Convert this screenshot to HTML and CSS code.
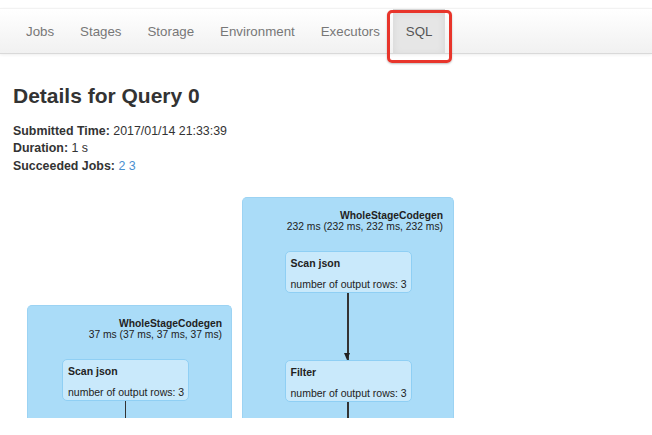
FILE: index.html
```html
<!DOCTYPE html>
<html>
<head>
<meta charset="utf-8">
<title>Details for Query 0</title>
<link rel="stylesheet" href="styles.css">
</head>
<body>
<nav class="navbar">
  <ul class="nav">
    <li class="nav-item"><a class="nav-link">Jobs</a></li>
    <li class="nav-item"><a class="nav-link">Stages</a></li>
    <li class="nav-item"><a class="nav-link">Storage</a></li>
    <li class="nav-item"><a class="nav-link">Environment</a></li>
    <li class="nav-item"><a class="nav-link">Executors</a></li>
    <li class="nav-item active"><a class="nav-link">SQL</a><span class="callout"></span></li>
  </ul>
</nav>
<main class="content">
  <h3 class="page-title">Details for Query 0</h3>
  <ul class="info">
    <li><strong>Submitted Time:</strong> 2017/01/14 21:33:39</li>
    <li><strong>Duration:</strong> 1 s</li>
    <li><strong>Succeeded Jobs:</strong> <a class="job-link">2</a> <a class="job-link">3</a></li>
  </ul>
  <div class="plan">
    <div class="cluster cluster-left">
      <div class="cluster-title">
        <div class="cluster-name">WholeStageCodegen</div>
        <div class="cluster-time">37 ms (37 ms, 37 ms, 37 ms)</div>
      </div>
      <div class="stack stack-left">
        <div class="node">
          <div class="node-name">Scan json</div>
          <div class="node-metric">number of output rows: 3</div>
        </div>
        <div class="edge stub"></div>
      </div>
    </div>
    <div class="cluster cluster-right">
      <div class="cluster-title">
        <div class="cluster-name">WholeStageCodegen</div>
        <div class="cluster-time">232 ms (232 ms, 232 ms, 232 ms)</div>
      </div>
      <div class="stack stack-center">
        <div class="node">
          <div class="node-name">Scan json</div>
          <div class="node-metric">number of output rows: 3</div>
        </div>
        <div class="edge arrow"></div>
        <div class="node">
          <div class="node-name">Filter</div>
          <div class="node-metric">number of output rows: 3</div>
        </div>
        <div class="edge stub"></div>
      </div>
    </div>
  </div>
</main>
</body>
</html>
```

FILE: styles.css
```css
html, body {
  margin: 0;
  padding: 0;
  background: #ffffff;
}

body {
  font-family: "Liberation Sans", Arial, Helvetica, sans-serif;
  color: #333333;
}

.navbar {
  margin-top: 8px;
  height: 46px;
  background: linear-gradient(#ffffff, #f1f1f1);
  border-top: 1px solid #f2f2f2;
  border-bottom: 1px solid #d9d9d9;
  box-shadow: 0 1px 3px rgba(0, 0, 0, 0.07);
  box-sizing: border-box;
}

.nav {
  list-style: none;
  margin: 0;
  padding: 0 0 0 13px;
  display: flex;
  height: 100%;
}

.nav-item {
  position: relative;
  display: flex;
  align-items: center;
  padding: 2px 13px 0;
}

.nav-link {
  font-size: 13.3px;
  color: #777777;
  line-height: 16px;
}

.nav-item.active {
  background: #e6e6e6;
  box-shadow: inset 0 3px 8px rgba(0, 0, 0, 0.08);
}

.nav-item.active .nav-link {
  color: #555555;
}

.callout {
  position: absolute;
  left: -6px;
  right: -7px;
  top: 1px;
  bottom: -10px;
  border: 3px solid #e8352b;
  border-radius: 5px;
  box-shadow: 0 1px 2px rgba(0, 0, 0, 0.25);
}

.content {
  padding: 0 13px;
}

.page-title {
  margin: 29px 0 14.5px;
  font-size: 21px;
  line-height: 25px;
  font-weight: bold;
  color: #333333;
}

.info {
  list-style: none;
  margin: 0;
  padding: 0;
  font-size: 12.4px;
  line-height: 17.5px;
  color: #333333;
}

.job-link {
  color: #4a8fcf;
}

.plan {
  margin: 22px 0 0 14px;
  height: 221px;
  display: flex;
  align-items: flex-end;
  gap: 10px;
}

.cluster {
  box-sizing: border-box;
  display: flex;
  flex-direction: column;
  padding-top: 12px;
  background: #aadcf8;
  border: 1px solid #9cd3f3;
  border-bottom: none;
  border-radius: 5px 5px 0 0;
  color: #222222;
}

.cluster-left {
  width: 205px;
  height: 113px;
}

.cluster-right {
  width: 212px;
  height: 221px;
}

.cluster-title {
  text-align: right;
  font-size: 10.3px;
  line-height: 11px;
  padding-right: 10px;
  margin-bottom: 19px;
}

.cluster-left .cluster-title {
  padding-right: 9px;
}

.cluster-name {
  font-weight: bold;
}

.stack {
  flex: 1;
  display: flex;
  flex-direction: column;
  align-items: center;
  width: 127px;
}

.stack-left {
  margin-left: 34px;
}

.stack-center {
  align-self: center;
}

.node {
  box-sizing: border-box;
  width: 127px;
  height: 42px;
  padding: 5px 5px 0;
  background: #c9e9fb;
  border: 1px solid #8fcff4;
  border-radius: 5px;
  font-size: 10.5px;
  line-height: 12px;
  color: #222222;
}

.node-name {
  font-weight: bold;
}

.node-metric {
  margin-top: 8.6px;
  white-space: nowrap;
}

.edge {
  position: relative;
  width: 1.3px;
  background: #333333;
}

.edge.arrow {
  height: 67px;
}

.edge.arrow::after {
  content: "";
  position: absolute;
  bottom: 0;
  left: -3px;
  border-left: 3.6px solid transparent;
  border-right: 3.6px solid transparent;
  border-top: 7px solid #222222;
}

.edge.stub {
  flex: 1;
}
```
